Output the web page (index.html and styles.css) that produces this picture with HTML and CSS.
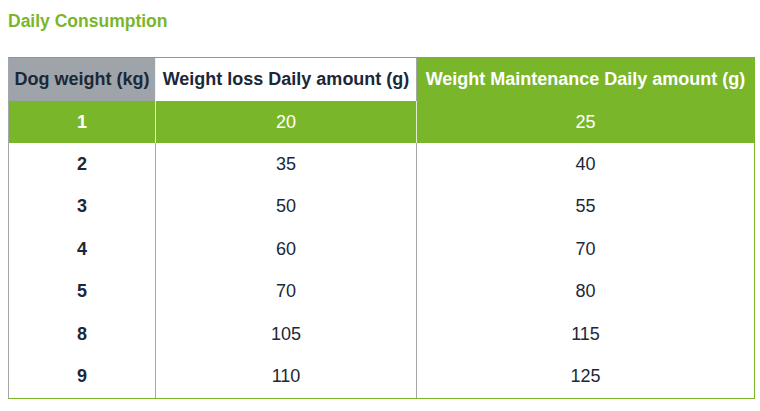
FILE: index.html
```html
<!DOCTYPE html>
<html lang="en">
<head>
<meta charset="utf-8">
<title>Daily Consumption</title>
<link rel="stylesheet" href="styles.css">
</head>
<body>
<h2 class="title">Daily Consumption</h2>
<table class="consumption">
  <colgroup>
    <col class="c1">
    <col class="c2">
    <col class="c3">
  </colgroup>
  <thead>
    <tr>
      <th class="h-weight">Dog weight (kg)</th>
      <th class="h-loss">Weight loss Daily amount (g)</th>
      <th class="h-maint">Weight Maintenance Daily amount (g)</th>
    </tr>
  </thead>
  <tbody>
    <tr class="hl"><td class="kg">1</td><td>20</td><td>25</td></tr>
    <tr><td class="kg">2</td><td>35</td><td>40</td></tr>
    <tr><td class="kg">3</td><td>50</td><td>55</td></tr>
    <tr><td class="kg">4</td><td>60</td><td>70</td></tr>
    <tr><td class="kg">5</td><td>70</td><td>80</td></tr>
    <tr><td class="kg">8</td><td>105</td><td>115</td></tr>
    <tr><td class="kg">9</td><td>110</td><td>125</td></tr>
  </tbody>
</table>
</body>
</html>
```
FILE: styles.css
```css
html {
  overflow: hidden;
}

body {
  margin: 8px 5px 0 8px;
  background: #ffffff;
  font-family: "Liberation Sans", Arial, sans-serif;
  color: #1b2838;
}

.title {
  margin: 3px 0 26px;
  font-size: 17.5px;
  line-height: 20px;
  font-weight: bold;
  color: #7ab62a;
}

.consumption {
  box-sizing: border-box;
  width: 747px;
  table-layout: fixed;
  border-collapse: separate;
  border-spacing: 0;
  border-top: 1px solid #7ab62a;
  border-bottom: 1px solid #7ab62a;
  border-left: 1px solid #a2a7ac;
  border-right: 1px solid #7ab62a;
  font-size: 18px;
}

.c1 { width: 146px; }
.c2 { width: 261px; }
.c3 { width: 338px; }

.consumption th,
.consumption td {
  padding: 0 4px;
  text-align: center;
  vertical-align: middle;
  white-space: nowrap;
}

.consumption th + th,
.consumption td + td {
  border-left: 1px solid #a2a7ac;
}

.consumption th {
  height: 43px;
  font-weight: bold;
}

.h-weight {
  background: #9ea4a9;
  color: #1b2838;
}

.consumption th.h-loss {
  background: #ffffff;
  color: #1b2838;
  border-left-color: #eef0f1;
}

.h-maint {
  background: #7ab62a;
  color: #ffffff;
}

.consumption td {
  height: 42.4px;
  font-weight: normal;
}

.consumption td.kg {
  font-weight: bold;
}

.consumption tr.hl td {
  background: #7ab62a;
  color: #ffffff;
}

.consumption tr.hl td + td {
  border-left-color: #dfeccd;
}
```
